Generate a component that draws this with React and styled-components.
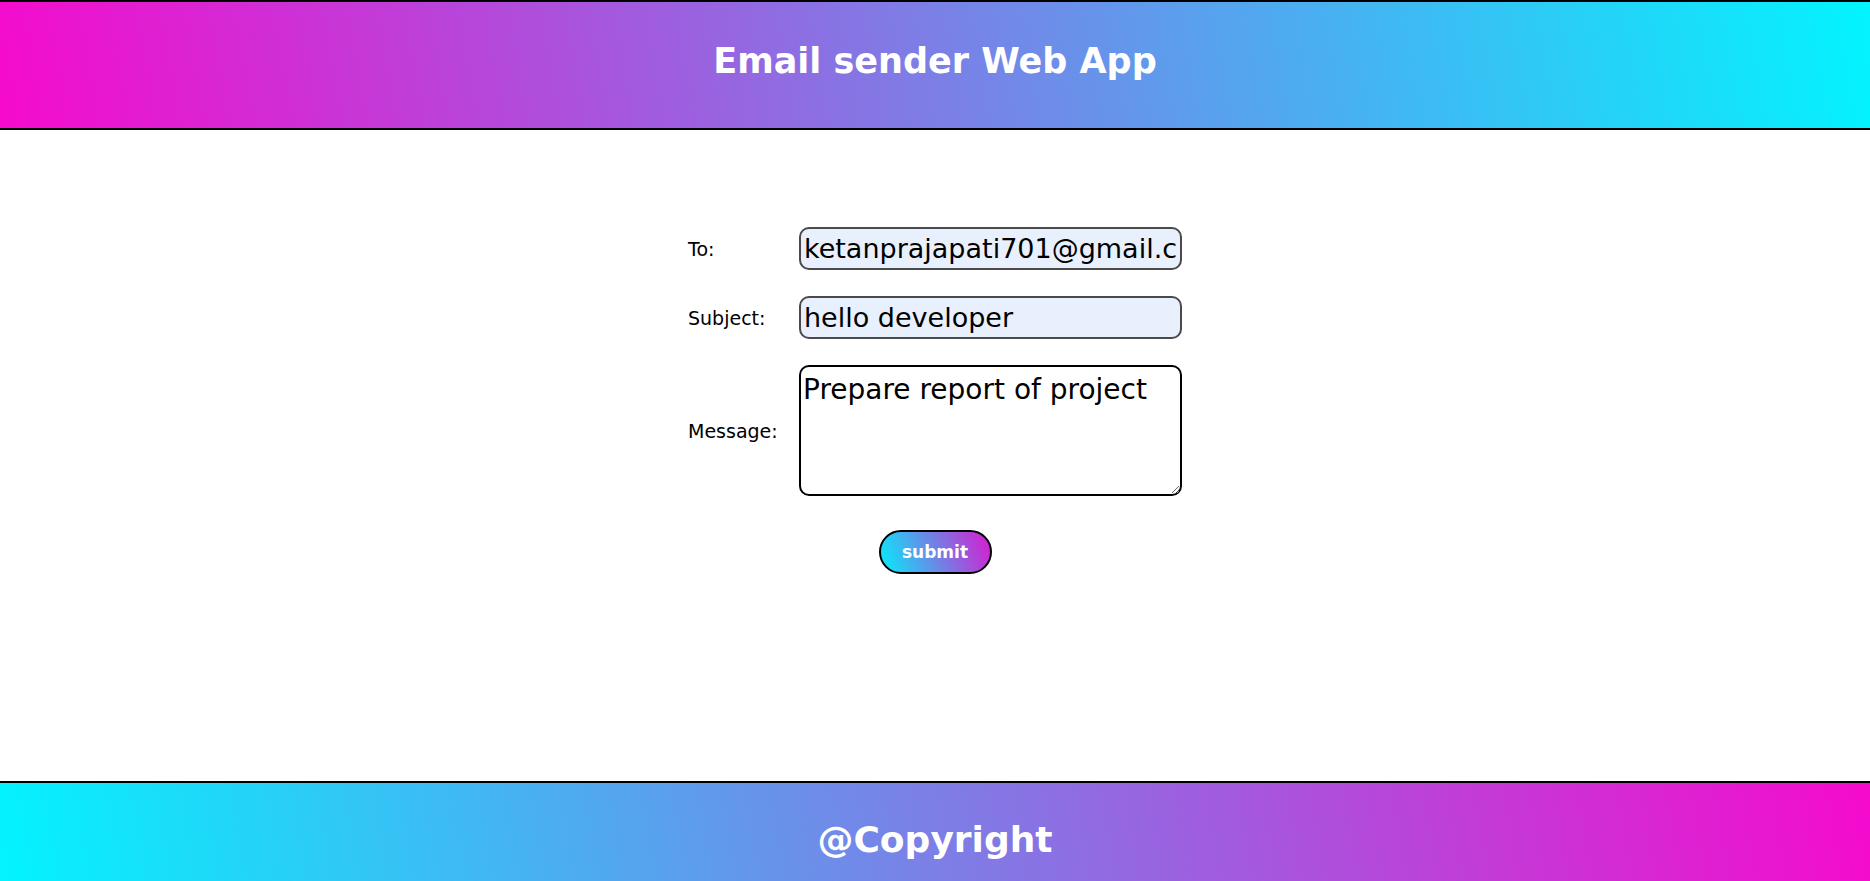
import styled, { createGlobalStyle } from "styled-components";
import { useState } from "react";

const GlobalStyle = createGlobalStyle`
  body {
    margin: 0;
    font-family: "Comic Sans MS", "DejaVu Sans", sans-serif;
    background: #fff;
  }
`;

const Page = styled.div`
  display: flex;
  flex-direction: column;
`;

const Header = styled.header`
  height: 130px;
  box-sizing: border-box;
  border-top: 2px solid #000;
  border-bottom: 2px solid #000;
  background: linear-gradient(80deg, #f60acd, #02f4ff);
  display: flex;
  align-items: center;
  justify-content: center;
  padding-bottom: 8px;
`;

const Title = styled.h1`
  margin: 0;
  color: #fff;
  font-size: 35px;
  font-weight: 700;
`;

const Main = styled.main`
  height: 651px;
  box-sizing: border-box;
  padding-top: 97px;
  display: flex;
  flex-direction: column;
  align-items: center;
`;

const Form = styled.form`
  display: flex;
  flex-direction: column;
  align-items: center;
`;

const Fields = styled.div`
  display: grid;
  grid-template-columns: 111px 383px;
  row-gap: 26px;
  align-items: center;
`;

const Label = styled.label`
  font-size: 19px;
  color: #000;
`;

const Input = styled.input`
  box-sizing: border-box;
  width: 383px;
  height: 43px;
  padding: 1px 3px;
  border: 2px solid #4a4a4a;
  border-radius: 10px;
  background: #e8f0fe;
  font-family: inherit;
  font-size: 27px;
  color: #000;
  outline: none;
`;

const TextArea = styled.textarea`
  box-sizing: border-box;
  width: 383px;
  height: 131px;
  padding: 6px 2px 1px;
  border: 2px solid #000;
  border-radius: 10px;
  background: #fff;
  font-family: inherit;
  font-size: 28px;
  color: #000;
  outline: none;
`;

const Submit = styled.button`
  margin-top: 34px;
  width: 113px;
  height: 44px;
  border: 2px solid #000;
  border-radius: 22px;
  background: linear-gradient(70deg, #06ecfb, #d81bcf);
  color: #fff;
  font-family: inherit;
  font-size: 17px;
  font-weight: 700;
  cursor: pointer;
`;

const Footer = styled.footer`
  height: 114px;
  box-sizing: border-box;
  border-top: 2px solid #000;
  background: linear-gradient(80deg, #02f4ff, #f60acd);
  display: flex;
  align-items: center;
  justify-content: center;
`;

const FooterText = styled.h2`
  margin: 0;
  color: #fff;
  font-size: 36px;
  font-weight: 700;
`;

export default function App() {
  const [to, setTo] = useState("ketanprajapati701@gmail.com");
  const [subject, setSubject] = useState("hello developer");
  const [message, setMessage] = useState("Prepare report of project");

  return (
    <Page>
      <GlobalStyle />
      <Header>
        <Title>Email sender Web App</Title>
      </Header>
      <Main>
        <Form onSubmit={(e) => e.preventDefault()}>
          <Fields>
            <Label htmlFor="to">To:</Label>
            <Input id="to" value={to} onChange={(e) => setTo(e.target.value)} />
            <Label htmlFor="subject">Subject:</Label>
            <Input id="subject" value={subject} onChange={(e) => setSubject(e.target.value)} />
            <Label htmlFor="message">Message:</Label>
            <TextArea id="message" value={message} onChange={(e) => setMessage(e.target.value)} />
          </Fields>
          <Submit type="submit">submit</Submit>
        </Form>
      </Main>
      <Footer>
        <FooterText>@Copyright</FooterText>
      </Footer>
    </Page>
  );
}
